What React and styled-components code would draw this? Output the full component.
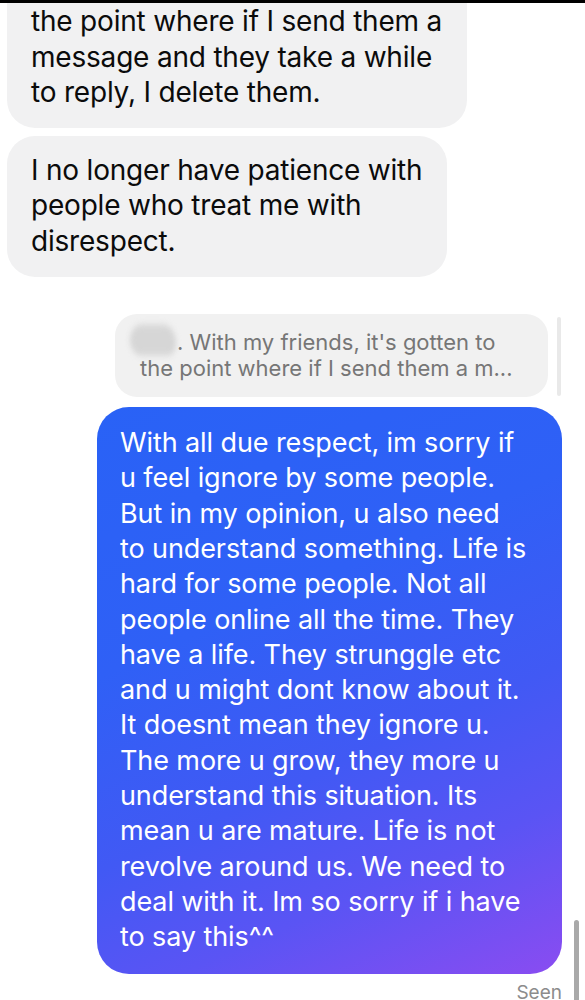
import React from 'react';
import styled, { createGlobalStyle } from 'styled-components';

const GlobalStyle = createGlobalStyle`
  html, body {
    margin: 0;
    padding: 0;
    background: #ffffff;
  }
  body {
    font-family: Inter, "Open Sans", "Liberation Sans", sans-serif;
    -webkit-font-smoothing: antialiased;
  }
`;

const incomingTop = [
  "With my friends, it's gotten to",
  'the point where if I send them a',
  'message and they take a while',
  'to reply, I delete them.',
];

const incomingSecond = [
  'I no longer have patience with',
  'people who treat me with',
  'disrespect.',
];

const outgoing = [
  'With all due respect, im sorry if',
  'u feel ignore by some people.',
  'But in my opinion, u also need',
  'to understand something. Life is',
  'hard for some people. Not all',
  'people online all the time. They',
  'have a life. They strunggle etc',
  'and u might dont know about it.',
  'It doesnt mean they ignore u.',
  'The more u grow, they more u',
  'understand this situation. Its',
  'mean u are mature. Life is not',
  'revolve around us. We need to',
  'deal with it. Im so sorry if i have',
  'to say this^^',
];

const Screen = styled.div`
  width: 585px;
  height: 1000px;
  overflow: hidden;
  display: flex;
  flex-direction: column;
  position: relative;
`;

const TopEdge = styled.div`
  height: 3px;
  background: #000;
  flex-shrink: 0;
  position: relative;
  z-index: 2;
`;

const Thread = styled.div`
  display: flex;
  flex-direction: column;
  padding: 0 23px 0 7px;
`;

const Bubble = styled.div`
  align-self: ${(p) => (p.$mine ? 'flex-end' : 'flex-start')};
  margin-top: ${(p) => p.$offset || 0}px;
  padding: 17px 25px 18px 24px;
  border-radius: ${(p) => (p.$mine ? 32 : 28)}px;
  background: ${(p) =>
    p.$mine
      ? 'linear-gradient(156deg, #2962f6 0%, #2f60f6 35%, #4159f4 60%, #5a54f4 78%, #8a4cf1 100%)'
      : '#f1f1f2'};
  color: ${(p) => (p.$mine ? '#ffffff' : '#0b0b0b')};
  font-size: ${(p) => (p.$mine ? 27 : 28)}px;
  line-height: 35.3px;
  letter-spacing: ${(p) => (p.$mine ? -0.1 : -0.2)}px;
`;

const Line = styled.span`
  display: block;
  white-space: nowrap;
`;

const ReplyRow = styled.div`
  align-self: flex-end;
  display: flex;
  align-items: stretch;
  gap: 9px;
  margin-top: 37px;
  margin-right: 1px;
`;

const Quote = styled.div`
  width: 433px;
  box-sizing: border-box;
  padding: 15px 20px 16px 25px;
  border-radius: 22px;
  background: #f1f1f1;
  color: #767676;
  font-size: 22px;
  line-height: 26px;
`;

const QuoteBar = styled.div`
  width: 4px;
  margin: 3px 0 1px;
  border-radius: 2px;
  background: #e9e9e9;
`;

const HiddenName = styled.span`
  display: inline-block;
  width: 46px;
  height: 24px;
  margin-left: -10px;
  margin-right: 1px;
  vertical-align: -4px;
  border-radius: 14px 16px 10px 14px;
  background: #d6d6d6;
  filter: blur(2.5px);
  transform: translateY(-2px) scaleY(1.3);
`;

const Outgoing = styled(Bubble)`
  margin-top: 10px;
  width: 465px;
  box-sizing: border-box;
  padding: 18px 20px 19px 23px;
`;

const Seen = styled.div`
  align-self: flex-end;
  margin-top: 8px;
  color: #8c8c8c;
  font-size: 19px;
  line-height: 22px;
`;

const Scrollbar = styled.div`
  position: absolute;
  right: 6px;
  top: 920px;
  width: 5px;
  height: 90px;
  border-radius: 3px;
  background: #a9a9a9;
`;

export default function App() {
  return (
    <Screen>
      <GlobalStyle />
      <TopEdge />
      <Thread>
        <Bubble $offset={-51}>
          {incomingTop.map((t) => (
            <Line key={t}>{t}</Line>
          ))}
        </Bubble>
        <Bubble $offset={8}>
          {incomingSecond.map((t) => (
            <Line key={t}>{t}</Line>
          ))}
        </Bubble>

        <ReplyRow>
          <Quote>
            <Line>
              <HiddenName />. With my friends, it's gotten to
            </Line>
            <Line>the point where if I send them a m...</Line>
          </Quote>
          <QuoteBar />
        </ReplyRow>

        <Outgoing $mine>
          {outgoing.map((t) => (
            <Line key={t}>{t}</Line>
          ))}
        </Outgoing>
        <Seen>Seen</Seen>
      </Thread>
      <Scrollbar />
    </Screen>
  );
}
